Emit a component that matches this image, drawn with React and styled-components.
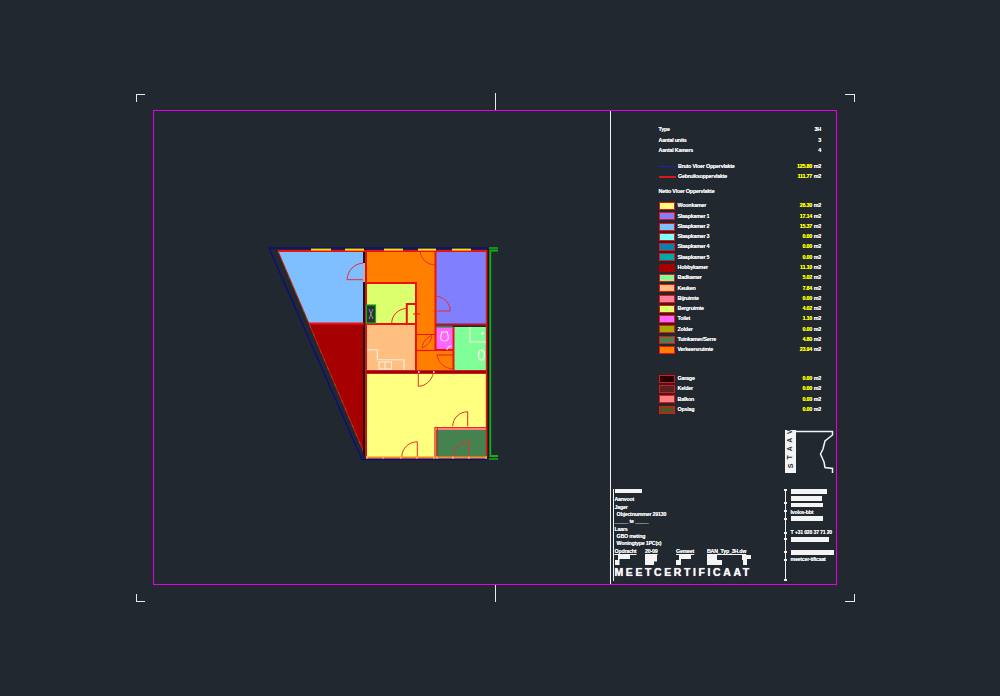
import React from "react";
import styled, { createGlobalStyle } from "styled-components";

const Global = createGlobalStyle`
  html, body { margin: 0; padding: 0; background: #212830; }
  #root { width: 1000px; height: 696px; }
`;

const Page = styled.div`
  position: relative;
  width: 1000px;
  height: 696px;
  box-sizing: border-box;
  padding: 110px 163px 110px 153px;
  background: #212830;
  font-family: "Liberation Sans", Arial, sans-serif;
  overflow: hidden;
`;

const Sheet = styled.div`
  display: grid;
  grid-template-columns: 456px 1fr;
  width: 684px;
  height: 475px;
  box-sizing: border-box;
  border: 1.5px solid #e400e4;
`;

const Drawing = styled.div`
  padding: 128px 0 0 105.5px;
`;

const Panel = styled.div`
  display: flex;
  flex-direction: column;
  border-left: 1.5px solid #f2f2f2;
  padding-top: 14px;
  min-width: 0;
`;

const Legend = styled.div`
  display: flex;
  flex-direction: column;
  padding: 0 15px 0 47.5px;
`;

const Group = styled.div`
  display: flex;
  flex-direction: column;
  margin-top: ${(p) => p.$gap || 0}px;
`;

const Row = styled.div`
  display: flex;
  align-items: center;
  height: 10.3px;
  color: #f8f8f8;
  font-size: 5.4px;
  font-weight: 700;
  letter-spacing: -0.24px;
  line-height: 1;
  white-space: nowrap;
  text-shadow: 0 0 0.6px rgba(255, 255, 255, 0.85);
`;

const Swatch = styled.span`
  flex: none;
  width: 14.5px;
  height: 6px;
  margin-right: 2.5px;
  background: ${(p) => p.$fill};
  border: 1.2px solid ${(p) => p.$edge || "#ee1111"};
`;

const LineKey = styled.span`
  flex: none;
  width: 17px;
  height: 1.5px;
  margin-right: 2.5px;
  background: ${(p) => p.$color};
`;

const Label = styled.span`
  flex: 1;
`;

const Value = styled.span`
  color: ${(p) => (p.$plain ? "#f8f8f8" : "#ffff00")};
  text-shadow: 0 0 0.6px ${(p) => (p.$plain ? "#ffffff" : "#ffff00")};
`;

const Unit = styled.span`
  width: 9px;
  text-align: right;
`;

const LogoSlot = styled.div`
  display: flex;
  justify-content: flex-end;
  margin-top: 15px;
  padding-right: 1px;
  height: 45px;
`;

const Footer = styled.div`
  display: grid;
  grid-template-columns: 174px 1fr;
  margin-top: 14px;
  flex: 1;
  min-height: 0;
`;

const TitleLeft = styled.div`
  display: flex;
  flex-direction: column;
  margin-left: 1.5px;
  padding-left: 1px;
  border-left: 1.5px solid #f2f2f2;
  color: #f8f8f8;
  font-size: 5.3px;
  font-weight: 700;
  letter-spacing: -0.22px;
  line-height: 7.3px;
  height: 92px;
  white-space: nowrap;
  text-shadow: 0 0 0.6px rgba(255, 255, 255, 0.85);
`;

const Redact = styled.div`
  flex: none;
  width: ${(p) => p.$w}px;
  height: ${(p) => p.$h || 4.5}px;
  margin-top: ${(p) => p.$top || 0}px;
  background: #f4f4f4;
`;

const Spacer = styled.div`
  height: ${(p) => p.$h}px;
`;

const Indented = styled.div`
  padding-left: ${(p) => p.$pad || 0}px;
`;

const Meta = styled.div`
  display: grid;
  grid-template-columns: 30.5px 31px 31px 31px 1fr;
  margin-top: 0.5px;
  text-decoration: underline;
`;

const Stamps = styled.div`
  display: grid;
  grid-template-columns: 30.5px 31px 31px 31px 1fr;
  height: 10px;
  margin-top: -0.5px;
`;

const Certificate = styled.div`
  margin-top: 2px;
  font-size: 10.5px;
  line-height: 11px;
  font-weight: 700;
  letter-spacing: 2.6px;
  text-shadow: 0 0 0.8px #ffffff;
`;

const TitleRight = styled.div`
  position: relative;
  display: flex;
  flex-direction: column;
  padding-left: 4.5px;
  border-left: 1px solid #f2f2f2;
  height: 92px;
  color: #f8f8f8;
  font-size: 5.2px;
  font-weight: 700;
  letter-spacing: -0.2px;
  line-height: 7px;
  white-space: nowrap;
  text-shadow: 0 0 0.6px rgba(255, 255, 255, 0.85);
`;

const Line = styled.div`
  margin-top: ${(p) => p.$top || 0}px;
`;

const Dot = styled.i`
  position: absolute;
  left: -2px;
  top: ${(p) => p.$y}px;
  width: 3px;
  height: 2px;
  background: #f4f4f4;
`;

const CropH = styled.i`
  position: absolute;
  left: ${(p) => p.$x}px;
  top: ${(p) => p.$y}px;
  width: ${(p) => p.$len}px;
  height: 1px;
  background: #e8e8e8;
`;

const CropV = styled.i`
  position: absolute;
  left: ${(p) => p.$x}px;
  top: ${(p) => p.$y}px;
  width: 1px;
  height: ${(p) => p.$len}px;
  background: #e8e8e8;
`;

const meta = [["Type", "3H"], ["Aantal units", "3"], ["Aantal Kamers", "4"]];
const rooms = [
  ["Woonkamer", "26.30", "#ffff80"],
  ["Slaapkamer 1", "17.14", "#8080ff"],
  ["Slaapkamer 2", "15.37", "#80bfff"],
  ["Slaapkamer 3", "0.00", "#80ffff"],
  ["Slaapkamer 4", "0.00", "#0f7fa8"],
  ["Slaapkamer 5", "0.00", "#00a8a8"],
  ["Hobbykamer", "11.10", "#a60000", "#a60000"],
  ["Badkamer", "5.02", "#80ff99"],
  ["Keuken", "7.84", "#ffbf80"],
  ["Bijruimte", "0.00", "#ff8099"],
  ["Bergruimte", "4.02", "#dfff66"],
  ["Toilet", "1.10", "#ff66ff"],
  ["Zolder", "0.00", "#a8a800"],
  ["Tuinkamer/Serre", "4.80", "#468250"],
  ["Verkeersruimte", "23.94", "#ff8000"],
];
const extras = [
  ["Garage", "0.00", "#2a0000"],
  ["Kelder", "0.00", "#5c2020"],
  ["Balkon", "0.00", "#ff7f7f"],
  ["Opslag", "0.00", "#555520"],
];

const RoomRow = ({ item }) => (
  <Row>
    <Swatch $fill={item[2]} $edge={item[3]} />
    <Label>{item[0]}</Label>
    <Value>{item[1]}</Value>
    <Unit>m2</Unit>
  </Row>
);

const Door = ({ d }) => <path d={d} fill="none" stroke="#ee2a2a" strokeWidth="1" />;

const FloorPlan = () => (
  <svg width="250" height="230" viewBox="260 240 250 230" style={{ display: "block" }}>
    {/* room fills */}
    <polygon points="278,252 364,252 364,324 309,324" fill="#80bfff" />
    <polygon points="309,325 364,325 364,455 365,457" fill="#a60000" />
    <polygon points="367,252 435,252 435,330 453,330 453,372 417,372 417,284 367,284" fill="#ff8000" />
    <rect x="367" y="284" width="49" height="40" fill="#dcff6e" />
    <rect x="367" y="326" width="49" height="45" fill="#ffbf80" />
    <rect x="436" y="252" width="51" height="73" fill="#8080ff" />
    <rect x="436" y="328" width="17" height="23" fill="#ff66ff" />
    <rect x="454" y="328" width="33" height="44" fill="#80ff99" />
    <rect x="367" y="374" width="120" height="84" fill="#ffff80" />
    <rect x="436" y="431" width="50" height="27" fill="#468250" />
    <rect x="436" y="428" width="50" height="3" fill="#ff7f80" />

    {/* outer shell */}
    <path d="M269,249 L487.5,249 M269,249 L362,460.5 L487,460.5" fill="none" stroke="#0c0c80" strokeWidth="1.3" />
    <path d="M278,252 L365,456" fill="none" stroke="#ee1111" strokeWidth="0.9" />
    <path d="M278,252 L365,456" fill="none" stroke="#2f9a2f" strokeWidth="0.6" strokeDasharray="3 6" />
    <path d="M364.5,250 V458" stroke="#14141e" strokeWidth="3" />
    <path d="M366,252 V458" stroke="#ee1111" strokeWidth="1.8" />

    {/* walls */}
    <g fill="none" stroke="#ee1111" strokeWidth="2">
      <path d="M278,252 H487 V458" />
      <path d="M366,284 H416 V371" />
      <path d="M366,325 H416" />
      <path d="M435.5,252 V351 H453" />
      <path d="M436,325.5 H487" stroke="#c01020" />
      <path d="M453.5,328 V372" />
      <path d="M309,324.5 H364" />
      <path d="M417,351.5 H435" strokeWidth="1.2" />
      <path d="M437,356 H453" strokeWidth="1" />
      <path d="M417,335.5 H435" strokeWidth="1" />
      <path d="M406.8,324 V305 H416" />
      <path d="M366,458.5 H487" stroke="#ff8a20" />
      <path d="M435,428 V458" strokeWidth="1.2" />
      <path d="M437.5,428 V458" strokeWidth="0.8" />
      <path d="M435,428.5 H486" strokeWidth="0.8" />
      <path d="M413,315 H420" strokeWidth="1" />
    </g>

    {/* windows */}
    {[[311, 331], [345, 364], [384, 403], [418, 436], [452, 471]].map(([a, b]) => (
      <path key={a} d={`M${a},250.6 H${b}`} stroke="#f2e400" strokeWidth="2" />
    ))}

    <rect x="366" y="371.5" width="121.5" height="3" fill="#7a1018" />
    <path d="M366,371.5 H487.5 M366,374.5 H487.5" stroke="#ee1111" strokeWidth="1" />
    <path d="M488,250 V459" stroke="#14141e" strokeWidth="1.4" />
    <path d="M486.5,252 V458" stroke="#ee1111" strokeWidth="1.4" />

    {/* meter box */}
    <rect x="366.5" y="306" width="9" height="18" fill="#2a3038" stroke="#18a818" strokeWidth="1.2" />
    <path d="M369,310 L373,320 M373,310 L369,320" stroke="#8a9098" strokeWidth="1" />
    <rect x="436.5" y="326.5" width="16" height="2" fill="#3a7a4a" />

    {/* doors */}
    <rect x="363" y="264" width="2" height="19" fill="#b4b4b4" />
    <Door d="M363,280.7 H347 C348,271 354,265 363,264" />
    <Door d="M420,252.5 C421,260 427,265.5 435,266" />
    <Door d="M436.7,297.3 C444,298 450,304 450.3,312 H436.7" />
    <Door d="M391.7,324 C392,316 398,310 406.7,309.3" />
    <Door d="M422,349 C423,342 427,338 432,336.5 C431,343 427,347 422,349 Z" />
    <Door d="M437,355.5 C438,364 445,369.5 453,370" />
    <Door d="M418.3,374 V387.3 C426,387 432,381 433.3,374" />
    <Door d="M467.7,412.7 V427.3 M452.7,427.3 C453,419 459,413 467.7,412.7" />
    <Door d="M417.3,442.7 V458 M401.7,458 C402,449 409,443 417.3,442.7" />
    <Door d="M468.7,442.7 V458 M453.3,458 C454,449 460,443 468.7,442.7" />
    <path d="M418,373 h1.5 M433,373 h1.5" stroke="#ffffff" strokeWidth="1.5" />

    {/* fixtures */}
    <g fill="none" stroke="#f6f0e0" strokeWidth="1.1">
      <path d="M367.3,350.7 H377.3 V360.7 H404 V370.7" />
      <rect x="379" y="363" width="12.5" height="7" />
      <path d="M385,363 V370" />
      <path d="M470,328 V343 H486" />
      <ellipse cx="481.5" cy="356" rx="3" ry="5" strokeWidth="1.4" />
      <path d="M442,333 L441,336 C440,340 441,342 444.5,342 C448,342 449,340 448,336 L447,333 M441,333 H448" strokeWidth="1.1" />
      <path d="M447,351 C447,349 449,347 452,347" />
    </g>
    <circle cx="482.5" cy="334.5" r="1.2" fill="#f6f0e0" />

    {/* bottom ticks */}
    <g stroke="#f0d060" strokeWidth="1">
      {[367, 383, 401, 417, 434, 437, 453, 469, 486].map((x) => (
        <path key={x} d={`M${x},457 V460`} />
      ))}
    </g>

    {/* dimension bracket */}
    <g fill="none" stroke="#12b012" strokeWidth="1.8">
      <path d="M498,251.5 H490.3 V457 H498" />
      <path d="M489,249 H498 M489,460 H498" strokeWidth="1.3" />
    </g>
  </svg>
);

const Logo = () => (
  <svg width="50" height="45" viewBox="785 429 50 45" style={{ display: "block" }}>
    <rect x="785" y="429" width="11" height="43" fill="#f4f4f4" />
    <path d="M796,430.5 H832.5 V434 L825,440 L823,448 L820.5,453 L824,461 L825,466.5 L832.5,467.5 V472" fill="none" stroke="#f4f4f4" strokeWidth="1.5" />
    {["S", "T", "A", "A", "V"].map((c, i) => (
      <text
        key={i}
        x="790.5"
        y={467 - i * 8.6}
        fontSize="7"
        fontWeight="700"
        fill="#212830"
        fontFamily="Liberation Sans, sans-serif"
        textAnchor="middle"
        transform={`rotate(-90 790.5 ${465 - i * 8.6})`}
      >
        {c}
      </text>
    ))}
  </svg>
);

const Stamp = ({ d }) => (
  <svg width="16" height="10" viewBox="0 0 16 10" style={{ display: "block" }}>
    <path d={d} fill="#f4f4f4" />
  </svg>
);

export default function App() {
  return (
    <Page>
      <Global />
      <Sheet>
        <Drawing>
          <FloorPlan />
        </Drawing>
        <Panel>
          <Legend>
            <Group>
              {meta.map(([a, b]) => (
                <Row key={a}>
                  <Label>{a}</Label>
                  <Value $plain>{b}</Value>
                </Row>
              ))}
            </Group>
            <Group $gap={5.5}>
              <Row>
                <LineKey $color="#2020b0" />
                <Label>Bruto Vloer Oppervlakte</Label>
                <Value>125.80</Value>
                <Unit>m2</Unit>
              </Row>
              <Row>
                <LineKey $color="#d81818" />
                <Label>Gebruiksoppervlakte</Label>
                <Value>111.77</Value>
                <Unit>m2</Unit>
              </Row>
            </Group>
            <Group $gap={5}>
              <Row>Netto Vloer Oppervlakte</Row>
            </Group>
            <Group $gap={3.5}>
              {rooms.map((r) => (
                <RoomRow key={r[0]} item={r} />
              ))}
            </Group>
            <Group $gap={18.5}>
              {extras.map((r) => (
                <RoomRow key={r[0]} item={r} />
              ))}
            </Group>
          </Legend>
          <LogoSlot>
            <Logo />
          </LogoSlot>
          <Footer>
            <TitleLeft>
              <Redact $w={27} />
              <Spacer $h={3} />
              <div>Aanvoot</div>
              <div>Jager</div>
              <Indented $pad={2}>Objectnummer 29130</Indented>
              <div>_____ te _____</div>
              <div>Laars</div>
              <Indented $pad={2}>GBO meting</Indented>
              <Indented $pad={2}>Woningtype 1PC(x)</Indented>
              <Meta>
                <span>Opdracht</span>
                <span>20-09</span>
                <span>Gemeet</span>
                <span>BAN_Typ_3H.dw</span>
              </Meta>
              <Stamps>
                <Stamp d="M3,0 H15 V4 H4.5 V10 H0 V5 H3 Z" />
                <Stamp d="M0,0 H12 V6.5 H9 V10 H0 Z" />
                <Stamp d="M3,0 H15 V4 H5 V10 H0 V5 H3 Z" />
                <Stamp d="M0,0 H10 V5 H15 V10 H0 Z" />
                <Stamp d="M4,0 H13 V4 H9 V10 H5 V5 H4 Z" />
              </Stamps>
              <Certificate>MEETCERTIFICAAT</Certificate>
            </TitleLeft>
            <TitleRight>
              {[0, 13, 21, 29, 43, 49, 62, 70, 90].map((y) => (
                <Dot key={y} $y={y} />
              ))}
              <Redact $w={36.5} $h={5} />
              <Redact $w={31.5} $top={2.5} />
              <Redact $w={32.5} $top={2} />
              <Line $top={1.5}>Ivolos-bbt</Line>
              <Redact $w={32.5} $top={0.5} />
              <Line $top={8}>T +31 020 37 71 20</Line>
              <Redact $w={38} $top={1.5} />
              <Redact $w={43} $top={8} $h={5} />
              <Line $top={1.5}>meetcer-tificaat</Line>
            </TitleRight>
          </Footer>
        </Panel>
      </Sheet>

      <CropH $x={136} $y={94} $len={9} />
      <CropV $x={136} $y={94} $len={8} />
      <CropH $x={845} $y={94} $len={9} />
      <CropV $x={854} $y={94} $len={8} />
      <CropH $x={136} $y={601} $len={9} />
      <CropV $x={136} $y={594} $len={8} />
      <CropH $x={845} $y={601} $len={9} />
      <CropV $x={854} $y={594} $len={8} />
      <CropV $x={495} $y={93} $len={17} />
      <CropV $x={495} $y={585} $len={17} />
    </Page>
  );
}
